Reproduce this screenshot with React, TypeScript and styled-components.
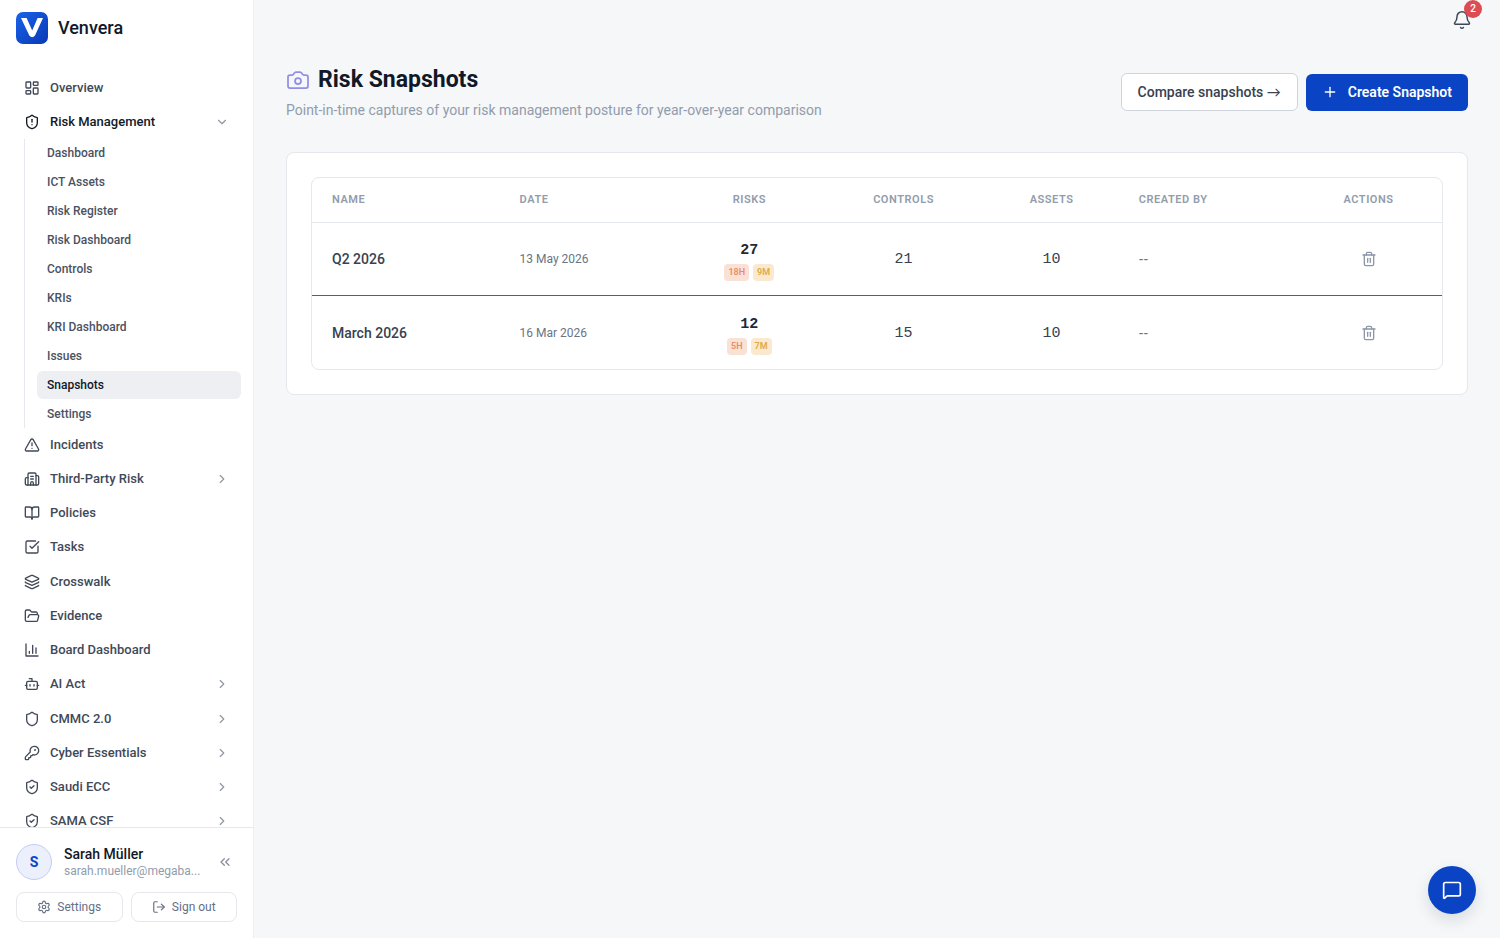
import React from "react";
import styled, { createGlobalStyle, css } from "styled-components";
import {
  Bell,
  BookOpen,
  Bot,
  Building2,
  Camera,
  ChevronDown,
  ChevronRight,
  ChevronsLeft,
  FolderOpen,
  KeyRound,
  Layers,
  LayoutDashboard,
  LogOut,
  MessageSquare,
  Plus,
  Settings,
  Shield,
  ShieldAlert,
  ShieldCheck,
  SquareCheckBig,
  Trash2,
  TriangleAlert,
  type LucideIcon,
} from "lucide-react";

const sans = `Roboto, Lato, "Liberation Sans", sans-serif`;
const mono = `"Liberation Mono", monospace`;

const color = {
  page: "#f5f7f9",
  surface: "#ffffff",
  border: "#e5e8ec",
  strongBorder: "#cfd4dc",
  ink: "#111827",
  text: "#374151",
  nav: "#414958",
  muted: "#929cab",
  primary: "#0a44c4",
};

const GlobalStyle = createGlobalStyle`
  *, *::before, *::after { box-sizing: border-box; }
  body {
    margin: 0;
    background: ${color.page};
    color: ${color.text};
    font-family: ${sans};
    font-size: 14px;
    line-height: 20px;
  }
  button { font: inherit; color: inherit; cursor: pointer; }
  a { color: inherit; text-decoration: none; }
  ul { list-style: none; margin: 0; padding: 0; }
  svg { flex-shrink: 0; display: block; }
`;

const Shell = styled.div`
  display: flex;
  min-height: 100vh;
`;

const Sidebar = styled.aside`
  position: sticky;
  top: 0;
  flex: 0 0 254px;
  height: 100vh;
  display: flex;
  flex-direction: column;
  background: ${color.surface};
  border-right: 1px solid #eceef1;
`;

const Brand = styled.a`
  display: flex;
  align-items: center;
  gap: 10px;
  padding: 12px 16px;
  color: ${color.ink};
  font-size: 18px;
  font-weight: 500;
  line-height: 24px;
`;

const Nav = styled.nav`
  flex: 1;
  min-height: 0;
  overflow: hidden;
  padding: 15px 12px 0;
`;

const NavGroup = styled.ul`
  & + & {
    margin-top: 1px;
  }
`;

const navRow = css<{ $open?: boolean }>`
  display: flex;
  align-items: center;
  gap: 10px;
  width: 100%;
  height: 34px;
  padding: 0 12px;
  border: 0;
  background: none;
  text-align: left;
  font-size: 13px;
  font-weight: 500;
  color: ${(p) => (p.$open ? color.ink : color.nav)};
`;

const NavLink = styled.a`
  ${navRow}
`;

const NavToggle = styled.button<{ $open?: boolean }>`
  ${navRow}
`;

const NavLabel = styled.span`
  flex: 1;
`;

const Chevron = styled.span`
  color: #9097a3;
`;

const SubList = styled.ul`
  display: flex;
  flex-direction: column;
  gap: 1px;
  margin-left: 12px;
  padding-left: 12px;
  border-left: 1px solid ${color.border};
`;

const SubLink = styled.a<{ $active?: boolean }>`
  display: flex;
  align-items: center;
  height: 28px;
  padding: 0 10px;
  border-radius: 6px;
  font-size: 12px;
  font-weight: 500;
  color: ${(p) => (p.$active ? color.ink : "#4a5262")};
  background: ${(p) => (p.$active ? "#eeeff2" : "transparent")};
`;

const Account = styled.div`
  display: flex;
  flex-direction: column;
  gap: 12px;
  padding: 16px;
  border-top: 1px solid ${color.border};
`;

const Profile = styled.div`
  display: flex;
  align-items: center;
  gap: 12px;
`;

const Avatar = styled.span`
  display: grid;
  place-items: center;
  width: 36px;
  height: 36px;
  border: 1px solid #c5cbf3;
  border-radius: 50%;
  background: #ecf0fc;
  color: ${color.primary};
  font-weight: 700;
`;

const Identity = styled.div`
  flex: 1;
  min-width: 0;
  padding-top: 2px;
  line-height: 17px;
  white-space: nowrap;
`;

const UserName = styled.div`
  color: ${color.ink};
  font-weight: 500;
`;

const UserEmail = styled.div`
  color: ${color.muted};
  font-size: 12px;
`;

const CollapseButton = styled.button`
  display: grid;
  place-items: center;
  width: 24px;
  height: 24px;
  padding: 0;
  border: 0;
  background: none;
  color: #8a919d;
`;

const AccountActions = styled.div`
  display: grid;
  grid-template-columns: 1fr 1fr;
  gap: 8px;
`;

const SmallButton = styled.button`
  display: flex;
  align-items: center;
  justify-content: center;
  gap: 6px;
  height: 30px;
  padding: 0;
  border: 1px solid ${color.border};
  border-radius: 8px;
  background: ${color.surface};
  color: #667085;
  font-size: 12px;
`;

const Content = styled.div`
  flex: 1;
  min-width: 0;
`;

const TopBar = styled.header`
  display: flex;
  justify-content: flex-end;
  align-items: center;
  height: 40px;
  padding: 0 28px;
`;

const BellButton = styled.button`
  position: relative;
  padding: 0;
  border: 0;
  background: none;
  color: #3d4656;
`;

const UnreadBadge = styled.span`
  position: absolute;
  top: -10px;
  right: -10px;
  width: 18px;
  height: 18px;
  border-radius: 50%;
  background: #dc4c52;
  color: #fff;
  font-size: 10px;
  font-weight: 500;
  line-height: 18px;
  text-align: center;
`;

const Main = styled.main`
  padding: 24px 32px;
`;

const PageHeader = styled.div`
  display: flex;
  align-items: center;
  justify-content: space-between;
  margin-bottom: 32px;
`;

const PageTitle = styled.h1`
  display: flex;
  align-items: center;
  gap: 8px;
  margin: 0 0 4px;
  color: ${color.ink};
  font-size: 23px;
  font-weight: 700;
  line-height: 32px;

  svg {
    color: #928fe6;
  }
`;

const Subtitle = styled.p`
  margin: 0;
  color: ${color.muted};
`;

const Actions = styled.div`
  display: flex;
  align-items: center;
  gap: 8px;
`;

const ActionButton = styled.button<{ $primary?: boolean }>`
  display: flex;
  align-items: center;
  gap: 10px;
  height: 38px;
  padding: 0 16px;
  border-radius: 6px;
  font-weight: 500;
  border: 1px solid ${color.strongBorder};
  background: ${color.surface};
  color: ${color.text};

  ${(p) =>
    p.$primary &&
    css`
      height: 37px;
      border: 0;
      background: ${color.primary};
      color: #fff;
      font-weight: 600;
    `}
`;

const Card = styled.section`
  padding: 24px;
  border: 1px solid ${color.border};
  border-radius: 8px;
  background: ${color.surface};
`;

const TableFrame = styled.div`
  border: 1px solid ${color.border};
  border-radius: 8px;
  overflow: hidden;
`;

const Table = styled.table`
  width: 100%;
  table-layout: fixed;
  border-collapse: separate;
  border-spacing: 0;
`;

const Column = styled.col<{ $share: number }>`
  width: ${(p) => p.$share}%;
`;

const HeadCell = styled.th<{ $center?: boolean }>`
  height: 45px;
  padding: 0 20px;
  border-bottom: 1px solid ${color.border};
  color: ${color.muted};
  font-size: 11px;
  font-weight: 600;
  letter-spacing: 0.05em;
  text-align: ${(p) => (p.$center ? "center" : "left")};
  text-transform: uppercase;
`;

const Cell = styled.td<{ $kind?: "name" | "date" | "count" | "author" }>`
  height: 73px;
  padding: 0 20px;
  text-align: ${(p) => (p.$kind === "count" ? "center" : "left")};

  tr:not(:last-child) > & {
    border-bottom: 1px solid #5b5d6b;
  }

  ${(p) => p.$kind === "name" && css`font-weight: 500;`}
  ${(p) => p.$kind === "date" && css`font-size: 12px; color: #6b7483;`}
  ${(p) => p.$kind === "author" && css`font-family: "Liberation Sans", sans-serif; color: #6b7483;`}
  ${(p) =>
    p.$kind === "count" &&
    css`
      padding-top: 2px;
      font-family: ${mono};
      font-size: 15px;
    `}
`;

const RiskTotal = styled.div`
  color: #1f2937;
  font-weight: 700;
  line-height: 24px;
`;

const RiskBadges = styled.div`
  display: flex;
  justify-content: center;
  gap: 4px;
  margin-top: 1px;
`;

const RiskBadge = styled.span<{ $level: "high" | "medium" }>`
  padding: 0 4px;
  border-radius: 4px;
  font-family: ${sans};
  font-size: 9px;
  font-weight: 600;
  line-height: 17px;
  color: ${(p) => (p.$level === "high" ? "#e98d65" : "#e0a848")};
  background: ${(p) => (p.$level === "high" ? "#fae1d6" : "#fae9cf")};
`;

const DeleteButton = styled.button`
  display: block;
  margin: 0 auto;
  padding: 0;
  border: 0;
  background: none;
  color: #8d97a8;
`;

const ChatButton = styled.button`
  position: fixed;
  right: 24px;
  bottom: 24px;
  display: grid;
  place-items: center;
  width: 48px;
  height: 48px;
  padding: 0;
  border: 0;
  border-radius: 50%;
  background: ${color.primary};
  color: #fff;
  box-shadow: 0 6px 16px rgba(15, 23, 42, 0.12);
`;

function Logo() {
  return (
    <svg width="32" height="32" viewBox="0 0 32 32" aria-hidden="true">
      <defs>
        <linearGradient id="logo-fill" x1="0" y1="0" x2="1" y2="1">
          <stop offset="0" stopColor="#1a63ea" />
          <stop offset="1" stopColor="#0838b4" />
        </linearGradient>
      </defs>
      <rect width="32" height="32" rx="7" fill="url(#logo-fill)" />
      <path
        d="M5 6 H10.6 L16.2 18.6 L21.6 6 H27 L19 23.6 Q16.2 27 13.3 23.6 Z"
        fill="#fff"
      />
    </svg>
  );
}

function BarChart({ size = 16, strokeWidth = 2 }: { size?: number; strokeWidth?: number }) {
  return (
    <svg
      width={size}
      height={size}
      viewBox="0 0 24 24"
      fill="none"
      stroke="currentColor"
      strokeWidth={strokeWidth}
      strokeLinecap="round"
      strokeLinejoin="round"
    >
      <path d="M3 3v18h18M18 17V9M13 17V5M8 17v-3" />
    </svg>
  );
}

type NavEntry = { label: string; icon: LucideIcon | typeof BarChart; expandable?: boolean };

const navGroups: NavEntry[][] = [
  [
    { label: "Incidents", icon: TriangleAlert },
    { label: "Third-Party Risk", icon: Building2, expandable: true },
    { label: "Policies", icon: BookOpen },
    { label: "Tasks", icon: SquareCheckBig },
  ],
  [
    { label: "Crosswalk", icon: Layers },
    { label: "Evidence", icon: FolderOpen },
    { label: "Board Dashboard", icon: BarChart },
    { label: "AI Act", icon: Bot, expandable: true },
  ],
  [
    { label: "CMMC 2.0", icon: Shield, expandable: true },
    { label: "Cyber Essentials", icon: KeyRound, expandable: true },
    { label: "Saudi ECC", icon: ShieldCheck, expandable: true },
    { label: "SAMA CSF", icon: ShieldCheck, expandable: true },
  ],
];

const riskPages = [
  "Dashboard",
  "ICT Assets",
  "Risk Register",
  "Risk Dashboard",
  "Controls",
  "KRIs",
  "KRI Dashboard",
  "Issues",
  "Snapshots",
  "Settings",
];

const columns = [
  { label: "Name", share: 16.6 },
  { label: "Date", share: 15.6 },
  { label: "Risks", share: 13, center: true },
  { label: "Controls", share: 14.3, center: true },
  { label: "Assets", share: 11.9, center: true },
  { label: "Created by", share: 15.6 },
  { label: "Actions", share: 13, center: true },
];

const snapshots = [
  { name: "Q2 2026", date: "13 May 2026", risks: 27, high: 18, medium: 9, controls: 21, assets: 10 },
  { name: "March 2026", date: "16 Mar 2026", risks: 12, high: 5, medium: 7, controls: 15, assets: 10 },
];

function NavItem({ label, icon: Icon, expandable }: NavEntry) {
  return (
    <li>
      {expandable ? (
        <NavToggle type="button" aria-expanded={false}>
          <Icon size={16} strokeWidth={2} />
          <NavLabel>{label}</NavLabel>
          <Chevron>
            <ChevronRight size={14} strokeWidth={2} />
          </Chevron>
        </NavToggle>
      ) : (
        <NavLink href="#">
          <Icon size={16} strokeWidth={2} />
          <NavLabel>{label}</NavLabel>
        </NavLink>
      )}
    </li>
  );
}

export default function App() {
  return (
    <>
      <GlobalStyle />
      <Shell>
        <Sidebar>
          <Brand href="#">
            <Logo />
            Venvera
          </Brand>
          <Nav aria-label="Main">
            <ul>
              <NavItem label="Overview" icon={LayoutDashboard} />
              <li>
                <NavToggle type="button" aria-expanded $open>
                  <ShieldAlert size={16} strokeWidth={2} />
                  <NavLabel>Risk Management</NavLabel>
                  <Chevron>
                    <ChevronDown size={14} strokeWidth={2} />
                  </Chevron>
                </NavToggle>
                <SubList>
                  {riskPages.map((page) => (
                    <li key={page}>
                      <SubLink href="#" $active={page === "Snapshots"}>
                        {page}
                      </SubLink>
                    </li>
                  ))}
                </SubList>
              </li>
            </ul>
            {navGroups.map((group) => (
              <NavGroup key={group[0].label}>
                {group.map((item) => (
                  <NavItem key={item.label} {...item} />
                ))}
              </NavGroup>
            ))}
          </Nav>
          <Account>
            <Profile>
              <Avatar>S</Avatar>
              <Identity>
                <UserName>Sarah Müller</UserName>
                <UserEmail>sarah.mueller@megaba...</UserEmail>
              </Identity>
              <CollapseButton type="button" aria-label="Collapse sidebar">
                <ChevronsLeft size={16} strokeWidth={2} />
              </CollapseButton>
            </Profile>
            <AccountActions>
              <SmallButton type="button">
                <Settings size={14} strokeWidth={2} />
                Settings
              </SmallButton>
              <SmallButton type="button">
                <LogOut size={14} strokeWidth={2} />
                Sign out
              </SmallButton>
            </AccountActions>
          </Account>
        </Sidebar>

        <Content>
          <TopBar>
            <BellButton type="button" aria-label="Notifications">
              <Bell size={20} strokeWidth={1.75} />
              <UnreadBadge>2</UnreadBadge>
            </BellButton>
          </TopBar>
          <Main>
            <PageHeader>
              <div>
                <PageTitle>
                  <Camera size={24} strokeWidth={1.75} />
                  Risk Snapshots
                </PageTitle>
                <Subtitle>
                  Point-in-time captures of your risk management posture for year-over-year comparison
                </Subtitle>
              </div>
              <Actions>
                <ActionButton type="button">Compare snapshots →</ActionButton>
                <ActionButton type="button" $primary>
                  <Plus size={16} strokeWidth={2} />
                  Create Snapshot
                </ActionButton>
              </Actions>
            </PageHeader>

            <Card>
              <TableFrame>
                <Table>
                  <colgroup>
                    {columns.map((c) => (
                      <Column key={c.label} $share={c.share} />
                    ))}
                  </colgroup>
                  <thead>
                    <tr>
                      {columns.map((c) => (
                        <HeadCell key={c.label} scope="col" $center={c.center}>
                          {c.label}
                        </HeadCell>
                      ))}
                    </tr>
                  </thead>
                  <tbody>
                    {snapshots.map((s) => (
                      <tr key={s.name}>
                        <Cell $kind="name">{s.name}</Cell>
                        <Cell $kind="date">{s.date}</Cell>
                        <Cell $kind="count">
                          <RiskTotal>{s.risks}</RiskTotal>
                          <RiskBadges>
                            <RiskBadge $level="high">{s.high}H</RiskBadge>
                            <RiskBadge $level="medium">{s.medium}M</RiskBadge>
                          </RiskBadges>
                        </Cell>
                        <Cell $kind="count">{s.controls}</Cell>
                        <Cell $kind="count">{s.assets}</Cell>
                        <Cell $kind="author">--</Cell>
                        <Cell>
                          <DeleteButton type="button" aria-label={`Delete ${s.name}`}>
                            <Trash2 size={16} strokeWidth={2} />
                          </DeleteButton>
                        </Cell>
                      </tr>
                    ))}
                  </tbody>
                </Table>
              </TableFrame>
            </Card>
          </Main>
        </Content>
        <ChatButton type="button" aria-label="Open chat">
          <MessageSquare size={20} strokeWidth={2} />
        </ChatButton>
      </Shell>
    </>
  );
}
